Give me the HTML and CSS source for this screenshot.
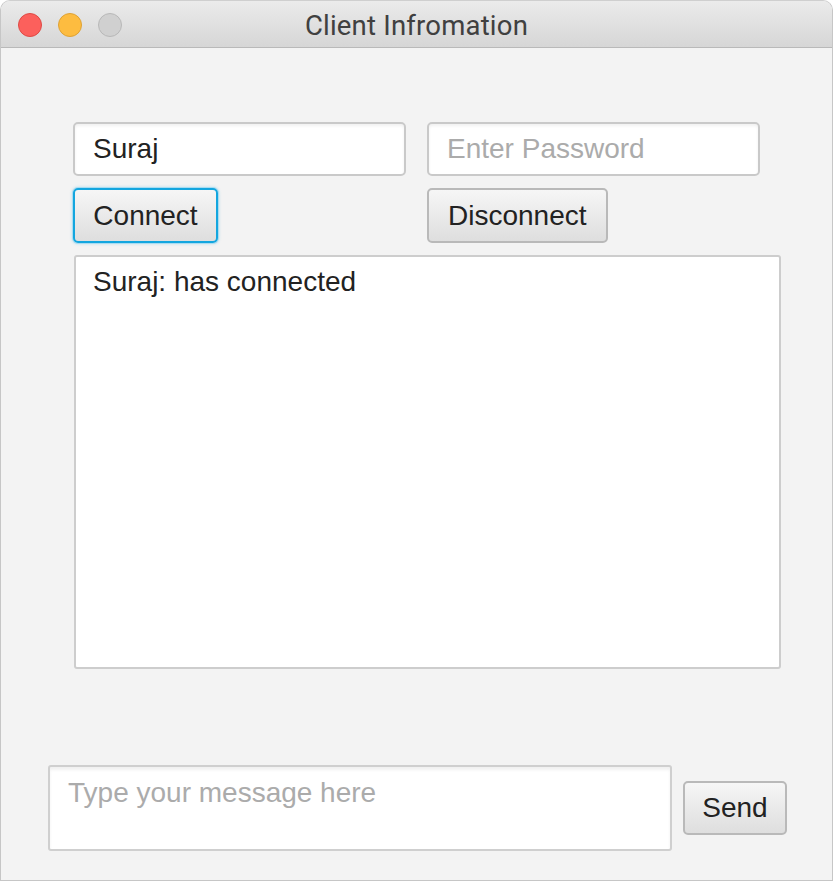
FILE: index.html
```html
<!DOCTYPE html>
<html>
<head>
<meta charset="utf-8">
<link rel="stylesheet" href="styles.css">
</head>
<body>
<div class="window">
  <div class="titlebar">
    <div class="lights">
      <span class="light red"></span>
      <span class="light yellow"></span>
      <span class="light gray"></span>
    </div>
    <div class="title">Client Infromation</div>
  </div>
  <div class="content">
    <div class="grid">
      <div class="field"><span class="val">Suraj</span></div>
      <div class="field"><span class="ph">Enter Password</span></div>
      <div><button class="btn focused">Connect</button></div>
      <div><button class="btn">Disconnect</button></div>
    </div>
    <div class="log">Suraj: has connected</div>
    <div class="bottom">
      <div class="msg"><span class="ph">Type your message here</span></div>
      <button class="btn send">Send</button>
    </div>
  </div>
</div>
</body>
</html>
```

FILE: styles.css
```css
html, body {
  margin: 0;
  padding: 0;
  background: #ffffff;
}
body {
  font-family: "Liberation Sans", Arial, sans-serif;
  color: #262626;
}
.window {
  width: 831px;
  height: 879px;
  border: 1px solid #c6c6c6;
  border-top-color: #cfcfcf;
  border-radius: 10px 10px 0 0;
  background: #f3f3f3;
  overflow: hidden;
  display: flex;
  flex-direction: column;
}
.titlebar {
  height: 46px;
  flex: none;
  position: relative;
  background: linear-gradient(#ebebeb, #d6d6d6);
  border-bottom: 1px solid #b9b9b9;
  display: flex;
  align-items: center;
  justify-content: center;
}
.lights {
  position: absolute;
  left: 17px;
  top: 12px;
  display: flex;
  gap: 16px;
}
.light {
  width: 24px;
  height: 24px;
  border-radius: 50%;
  box-sizing: border-box;
}
.red { background: #fc605c; border: 1px solid #de4a45; }
.yellow { background: #fdbc40; border: 1px solid #dea235; }
.gray { background: #d0d0d0; border: 1px solid #b8b8b8; }
.title {
  font-family: "Roboto", "Liberation Sans", sans-serif;
  font-size: 27.5px;
  color: #404040;
  letter-spacing: 0.2px;
  margin-top: 2px;
}
.content {
  flex: 1;
  position: relative;
  padding: 74px 0 0 72px;
}
.grid {
  display: grid;
  grid-template-columns: 333px 333px;
  column-gap: 21px;
  row-gap: 12px;
}
.field {
  height: 54px;
  box-sizing: border-box;
  background: #fff;
  border: 2px solid #c9c9c9;
  border-radius: 5px;
  box-shadow: inset 0 2px 3px rgba(0,0,0,0.06);
  display: flex;
  align-items: center;
  padding-left: 18px;
  font-size: 28px;
}
.val { color: #222; }
.ph { color: #ababab; }
.btn {
  height: 55px;
  box-sizing: border-box;
  font-family: "Liberation Sans", Arial, sans-serif;
  font-size: 28px;
  color: #222;
  background: linear-gradient(#f6f6f6, #dedede);
  border: 2px solid #b9b9b9;
  border-radius: 5px;
  padding: 0 19px;
  margin: 0;
}
.btn.focused {
  border-color: #13a6df;
  box-shadow: 0 0 0 1px #a9dcf1, 0 0 3px 1px rgba(19,166,223,0.25);
  width: 145px;
  padding: 0;
}
.log {
  margin-top: 12px;
  margin-left: 1px;
  width: 707px;
  height: 414px;
  box-sizing: border-box;
  background: #fff;
  border: 2px solid #cdcdcd;
  border-radius: 3px;
  padding: 9px 17px;
  font-size: 28px;
  color: #222;
}
.bottom {
  margin-top: 96px;
  margin-left: -25px;
  display: flex;
  align-items: center;
  gap: 11px;
}
.msg {
  width: 624px;
  height: 86px;
  box-sizing: border-box;
  background: #fff;
  border: 2px solid #cfcfcf;
  border-radius: 3px;
  box-shadow: inset 0 3px 3px rgba(0,0,0,0.06);
  padding: 10px 18px;
  font-size: 28px;
}
.btn.send {
  width: 104px;
  height: 54px;
  padding: 0;
}
```
